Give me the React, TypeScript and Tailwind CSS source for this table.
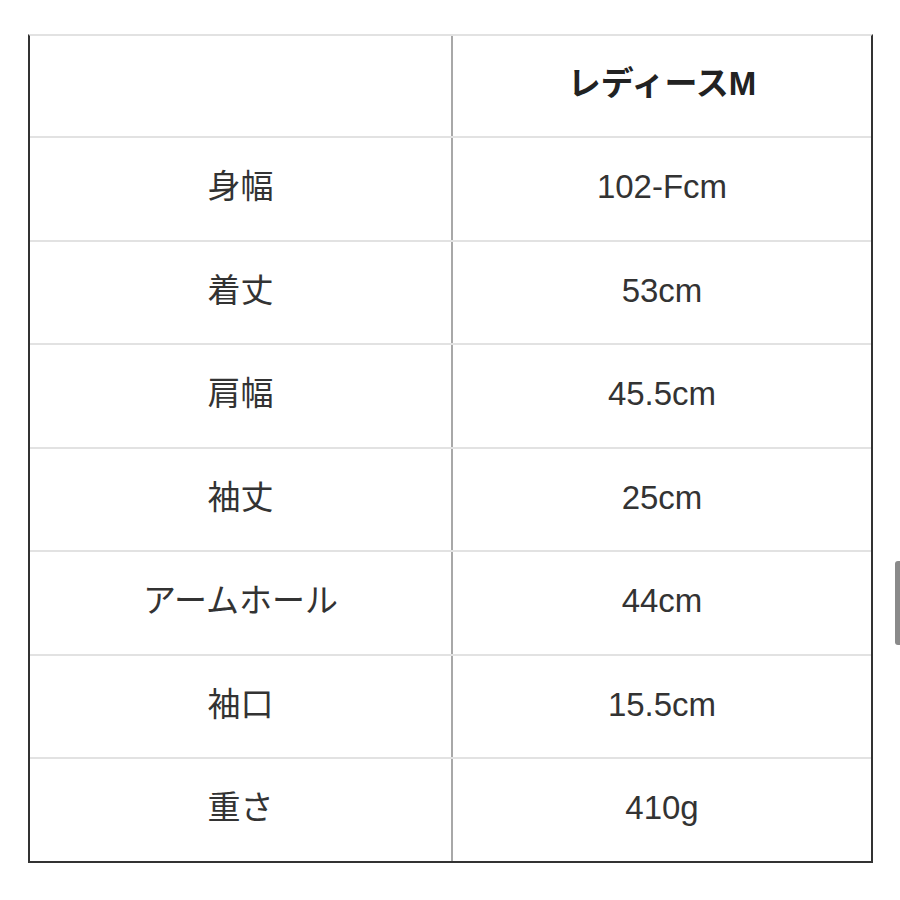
const rows: [string, string][] = [
  ['身幅', '102-Fcm'],
  ['着丈', '53cm'],
  ['肩幅', '45.5cm'],
  ['袖丈', '25cm'],
  ['アームホール', '44cm'],
  ['袖口', '15.5cm'],
  ['重さ', '410g'],
];

export default function App() {
  return (
    <div
      className="relative w-[900px] h-[900px] bg-white pt-[34px] pl-[28px] text-[#333]"
      style={{ fontFamily: '"Liberation Sans", "Noto Sans CJK JP", sans-serif' }}
    >
      <div className="w-[845px] border-l-2 border-r-2 border-b-2 border-l-[#333] border-r-[#333] border-b-[#333] border-t-2 border-t-[#e2e2e2]">
        <div className="grid grid-cols-[423px_1fr] h-[102px] border-b-2 border-[#e2e2e2]">
          <div className="border-r-2 border-[#a8a8a8]" />
          <div className="flex items-center justify-center pb-[4px] text-[33px] font-bold text-[#222]">
            レディースM
          </div>
        </div>
        {rows.map(([label, value], i) => (
          <div
            key={label}
            className={
              i < rows.length - 1
                ? 'grid grid-cols-[423px_1fr] h-[103.5px] border-b-2 border-[#e2e2e2]'
                : 'grid grid-cols-[423px_1fr] h-[101.5px]'
            }
          >
            <div className="flex items-center justify-center pb-[4px] border-r-2 border-[#a8a8a8] text-[33px]">
              {label}
            </div>
            <div className="flex items-center justify-center pb-[4px] text-[33px]">{value}</div>
          </div>
        ))}
      </div>
      <div className="absolute right-0 top-[561px] w-[5px] h-[84px] rounded-l-[3px] bg-[#8a8a8a]" />
    </div>
  );
}
